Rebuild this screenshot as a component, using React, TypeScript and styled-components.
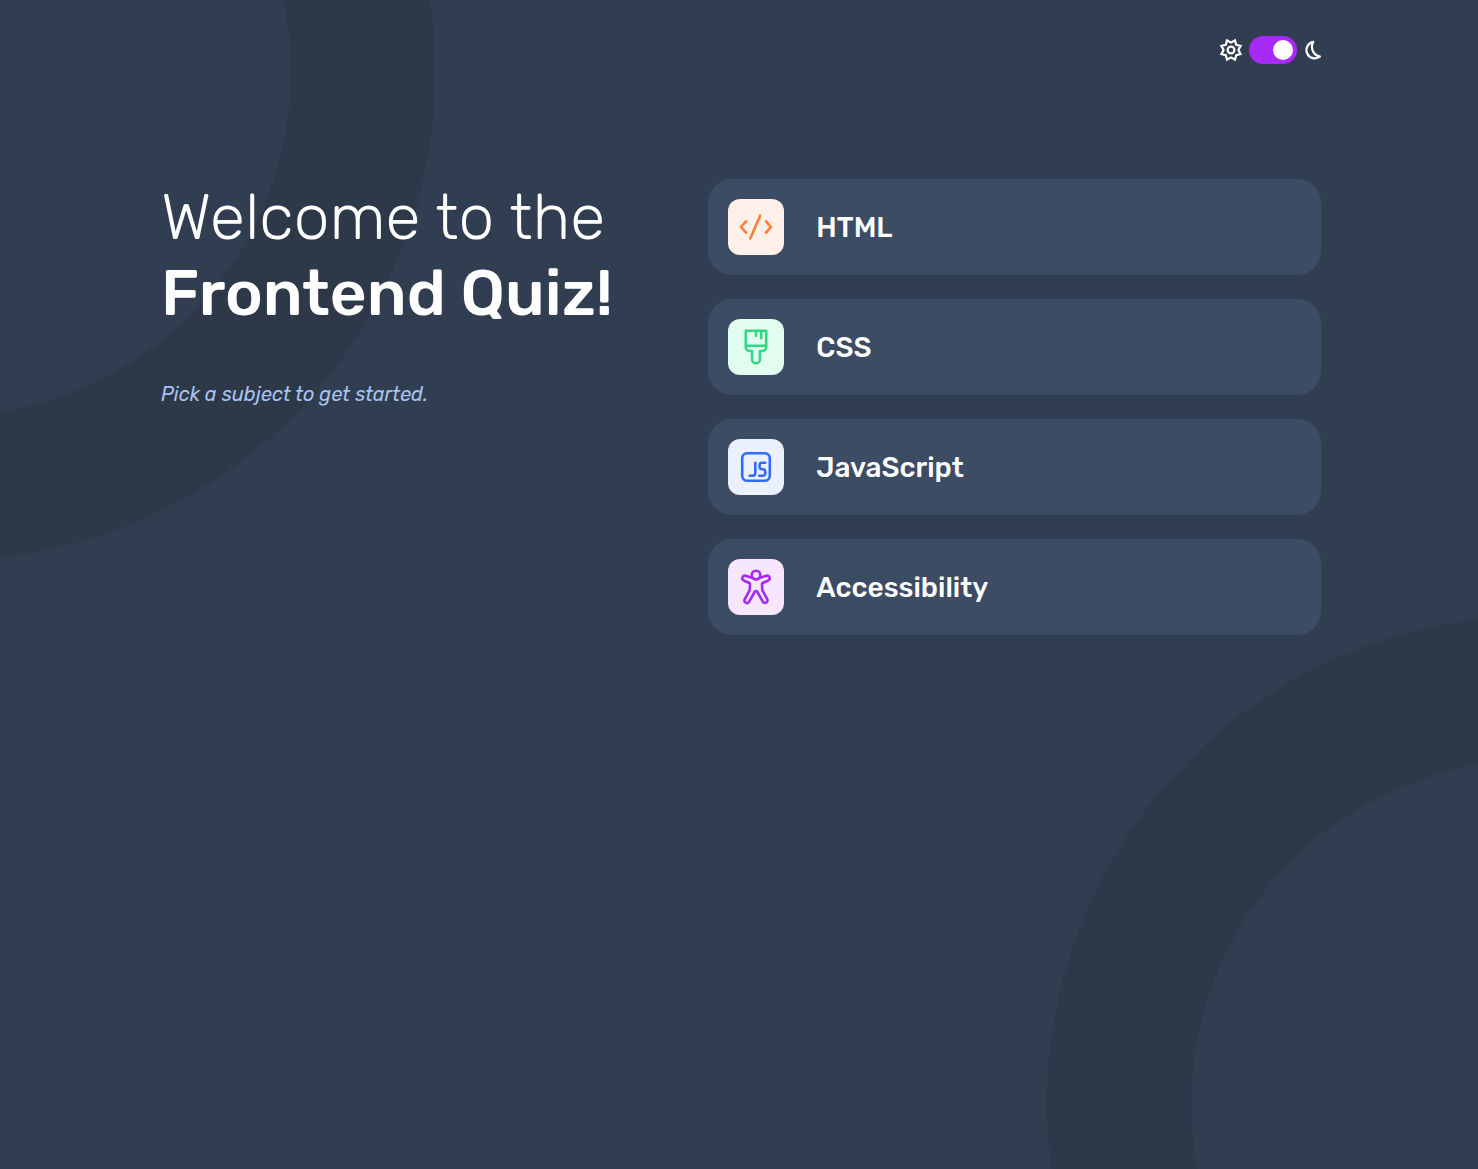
import React, { useState } from "react";
import styled, { createGlobalStyle } from "styled-components";

const GlobalStyle = createGlobalStyle`
  *, *::before, *::after { box-sizing: border-box; }
  body {
    margin: 0;
    background: #313e51;
    font-family: Rubik, Roboto, sans-serif;
    color: #fff;
  }
`;

const Page = styled.div`
  position: relative;
  min-height: 100vh;
  overflow: hidden;
  padding: 36px 157px 48px 161px;

  @media (max-width: 1100px) {
    padding: 36px 32px 48px;
  }
`;

const Ring = styled.div<{ $corner: "top" | "bottom" }>`
  position: absolute;
  width: 976px;
  height: 976px;
  border: 144px solid #2d3949;
  border-radius: 50%;
  pointer-events: none;
  ${({ $corner }) =>
    $corner === "top" ? "top: -416px; left: -541px;" : "bottom: -423px; right: -545px;"}
`;

const Header = styled.header`
  position: relative;
  display: flex;
  justify-content: flex-end;
  align-items: center;
  gap: 6px;
  height: 28px;
`;

const Switch = styled.input`
  appearance: none;
  display: flex;
  align-items: center;
  width: 48px;
  height: 28px;
  margin: 0;
  padding: 4px;
  border-radius: 14px;
  background: #a729f5;
  cursor: pointer;

  &::before {
    content: "";
    width: 20px;
    height: 20px;
    border-radius: 50%;
    background: #fff;
  }

  &:checked {
    justify-content: flex-end;
  }
`;

const Main = styled.main`
  position: relative;
  display: grid;
  grid-template-columns: 9fr 11fr;
  gap: 46px;
  margin-top: 115px;

  @media (max-width: 1100px) {
    grid-template-columns: 1fr;
  }
`;

const Title = styled.h1`
  margin: 0;
  font-size: 64px;
  line-height: 76px;
  font-weight: 300;
  white-space: nowrap;
`;

const TitleStrong = styled.strong`
  display: block;
  font-weight: 500;
`;

const Hint = styled.p`
  margin: 48px 0 0;
  font-size: 20px;
  line-height: 30px;
  font-style: italic;
  color: #a7c3ee;
`;

const SubjectList = styled.ul`
  display: flex;
  flex-direction: column;
  gap: 24px;
  margin: 0;
  padding: 0;
  list-style: none;
`;

const SubjectButton = styled.button`
  display: flex;
  align-items: center;
  gap: 32px;
  width: 100%;
  padding: 20px;
  border: 0;
  border-radius: 24px;
  background: #3d4c65;
  color: #fff;
  font-family: inherit;
  font-size: 28px;
  line-height: 33px;
  font-weight: 500;
  text-align: left;
  cursor: pointer;
`;

const Tile = styled.span<{ $bg: string; $ink: string }>`
  display: grid;
  place-items: center;
  width: 56px;
  height: 56px;
  border-radius: 12px;
  background: ${({ $bg }) => $bg};
  color: ${({ $ink }) => $ink};
`;

const Intro = styled.section`
  display: flex;
  flex-direction: column;
`;

const Glyph = ({ children }: { children: React.ReactNode }) => (
  <svg
    width="40"
    height="40"
    viewBox="0 0 40 40"
    fill="none"
    stroke="currentColor"
    strokeWidth="2.6"
    strokeLinecap="round"
    strokeLinejoin="round"
    aria-hidden="true"
  >
    {children}
  </svg>
);

const subjects = [
  {
    name: "HTML",
    bg: "#fff1e9",
    ink: "#ff7e35",
    icon: <path d="M10 14.3 5 20l5 5.7M24.2 8.6 14.3 31.4M30 14.3l5 5.7-5 5.7" />,
  },
  {
    name: "CSS",
    bg: "#e0fdef",
    ink: "#2fd887",
    icon: (
      <path d="M9.8 3.8h20.4V20a4 4 0 0 1-4 4h-2.300v8.400a3.900 3.900 0 0 1-7.800 0V24h-2.300a4 4 0 0 1-4-4zM9.800 18.800h20.400M20 3.800v5M25.200 3.800v7.400" />
    ),
  },
  {
    name: "JavaScript",
    bg: "#ebf0ff",
    ink: "#306aff",
    icon: (
      <>
        <rect x="6.2" y="6.2" width="27.6" height="27.6" rx="5" />
        <path d="M19.300 15.800v10.200a2.700 2.700 0 0 1-2.700 2.700h-3M29.200 15.800h-3.200a2.500 2.500 0 0 0-2.500 2.500v1.400a2.500 2.500 0 0 0 2.500 2.500h.8a2.500 2.500 0 0 1 2.500 2.500v1.500a2.500 2.500 0 0 1-2.500 2.500h-3.600" />
      </>
    ),
  },
  {
    name: "Accessibility",
    bg: "#f6e7ff",
    ink: "#a729f5",
    icon: (
      <>
        <circle cx="20" cy="8" r="4.3" />
        <path d="M15.800 10.800 9.400 8.700a2.600 2.600 0 0 0-1.800 4.800l6.200 2.700q.4 3.600-.2 7.200L8.800 32.200a2.500 2.500 0 0 0 4.400 2.400l5.400-9.600a1.600 1.600 0 0 1 2.800 0l5.400 9.600a2.500 2.500 0 0 0 4.400-2.400l-4.800-8.800q-.6-3.600-.2-7.200l6.200-2.700a2.600 2.600 0 0 0-1.800-4.800L24.200 10.800q-4.200 3-8.400 0" />
      </>
    ),
  },
];

const starPoints = Array.from({ length: 16 }, (_, i) => {
  const r = i % 2 ? 10.4 : 7.4;
  const a = (i * Math.PI) / 8;
  return `${(12 + r * Math.cos(a)).toFixed(2)},${(12 + r * Math.sin(a)).toFixed(2)}`;
}).join(" ");

const SunIcon = () => (
  <svg width="24" height="24" viewBox="0 0 24 24" fill="none" stroke="#fff" strokeWidth="2.2" strokeLinejoin="miter" aria-hidden="true">
    <polygon points={starPoints} />
    <circle cx="12" cy="12" r="3.4" />
  </svg>
);

const MoonIcon = () => (
  <svg width="18" height="24" viewBox="0 0 18 24" fill="none" stroke="#fff" strokeWidth="2.2" strokeLinejoin="round" aria-hidden="true">
    <path d="M10.300 3.900A8.300 8.300 0 1 0 17 18.500A9.800 9.800 0 0 1 10.300 3.900Z" />
  </svg>
);

export default function App() {
  const [dark, setDark] = useState(true);
  return (
    <>
      <GlobalStyle />
      <Page>
        <Ring $corner="top" />
        <Ring $corner="bottom" />
        <Header>
          <SunIcon />
          <Switch
            type="checkbox"
            role="switch"
            aria-label="Dark mode"
            checked={dark}
            onChange={(e) => setDark(e.target.checked)}
          />
          <MoonIcon />
        </Header>
        <Main>
          <Intro>
            <Title>
              Welcome to the <TitleStrong>Frontend Quiz!</TitleStrong>
            </Title>
            <Hint>Pick a subject to get started.</Hint>
          </Intro>
          <SubjectList>
            {subjects.map((s) => (
              <li key={s.name}>
                <SubjectButton type="button">
                  <Tile $bg={s.bg} $ink={s.ink}>
                    <Glyph>{s.icon}</Glyph>
                  </Tile>
                  {s.name}
                </SubjectButton>
              </li>
            ))}
          </SubjectList>
        </Main>
      </Page>
    </>
  );
}
